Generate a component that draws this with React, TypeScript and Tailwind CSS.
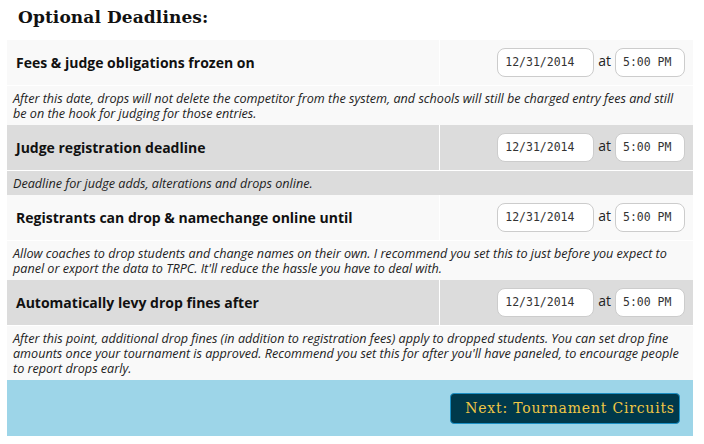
import React from "react";

type Row = { label: string; desc: string; headBg: string; descBg: string };

const rows: Row[] = [
  {
    label: "Fees & judge obligations frozen on",
    desc: "After this date, drops will not delete the competitor from the system, and schools will still be charged entry fees and still be on the hook for judging for those entries.",
    headBg: "bg-[#f9f9f9]",
    descBg: "bg-[#f9f9f9]",
  },
  {
    label: "Judge registration deadline",
    desc: "Deadline for judge adds, alterations and drops online.",
    headBg: "bg-[#dcdcdc]",
    descBg: "bg-[#dcdcdc]",
  },
  {
    label: "Registrants can drop & namechange online until",
    desc: "Allow coaches to drop students and change names on their own. I recommend you set this to just before you expect to panel or export the data to TRPC. It'll reduce the hassle you have to deal with.",
    headBg: "bg-[#f9f9f9]",
    descBg: "bg-[#f9f9f9]",
  },
  {
    label: "Automatically levy drop fines after",
    desc: "After this point, additional drop fines (in addition to registration fees) apply to dropped students. You can set drop fine amounts once your tournament is approved. Recommend you set this for after you'll have paneled, to encourage people to report drops early.",
    headBg: "bg-[#dcdcdc]",
    descBg: "bg-[#f9f9f9]",
  },
];

function DeadlineRow({ row }: { row: Row }) {
  return (
    <div>
      <div className={`flex h-[45px] ${row.headBg}`}>
        <div className="flex w-[433px] items-center border-r border-white pl-[9px] text-[14px] font-bold text-[#111]">
          {row.label}
        </div>
        <div className="flex flex-1 items-center justify-end pr-[8px]">
          <div className="flex h-[29px] w-[97px] items-center rounded-[8px] border border-[#cccccc] bg-white pl-[7px] font-['DejaVu_Sans_Mono',monospace] text-[11.5px] text-[#333]">
            12/31/2014
          </div>
          <span className="ml-[4px] mr-[4px] -mt-[4px] text-[14px] leading-[18px] text-[#222]">at</span>
          <div className="flex h-[29px] w-[70px] items-center rounded-[8px] border border-[#cccccc] bg-white pl-[7px] font-['DejaVu_Sans_Mono',monospace] text-[11.5px] text-[#333]">
            5:00 PM
          </div>
        </div>
      </div>
      <div
        className={`border-t border-white pl-[6px] pr-[8px] pt-[5px] pb-[4px] text-[12.6px] italic leading-[15px] text-[#222] ${row.descBg}`}
      >
        {row.desc}
      </div>
    </div>
  );
}

export default function App() {
  return (
    <div className="h-[444px] w-[704px] bg-white font-['Open_Sans',sans-serif]">
      <h2 className="h-[40px] pl-[18px] pt-[6px] font-['DejaVu_Serif',serif] text-[17px] font-bold leading-[22px] tracking-[0.1px] text-[#111]">
        Optional Deadlines:
      </h2>
      <div className="ml-[7px] w-[686px]">
        {rows.map((r) => (
          <DeadlineRow key={r.label} row={r} />
        ))}
        <div className="flex h-[56px] items-center justify-end bg-[#9dd5e8] pr-[13px]">
          <button className="flex h-[31px] w-[230px] items-center justify-center rounded-[4px] border border-[#1b8fc4] bg-[#00394b] pl-[10px] font-['DejaVu_Serif',serif] text-[14px] tracking-[0.8px] text-[#efc645]">
            Next: Tournament Circuits
          </button>
        </div>
      </div>
    </div>
  );
}
